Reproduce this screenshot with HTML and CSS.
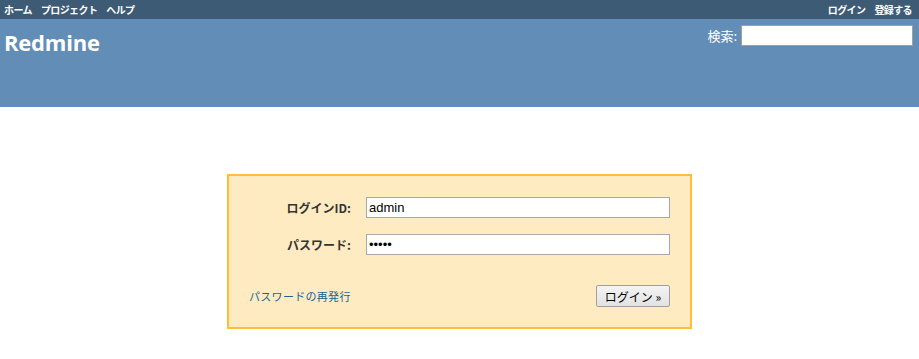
FILE: index.html
```html
<!DOCTYPE html>
<html lang="ja">
<head>
<meta charset="utf-8">
<title>Redmine</title>
<link rel="stylesheet" href="styles.css">
</head>
<body>
<div class="top-menu">
  <ul class="menu">
    <li><a href="#">ホーム</a></li>
    <li><a href="#">プロジェクト</a></li>
    <li><a href="#">ヘルプ</a></li>
  </ul>
  <ul class="menu">
    <li><a href="#">ログイン</a></li>
    <li><a href="#">登録する</a></li>
  </ul>
</div>
<div class="header">
  <h1 class="title">Redmine</h1>
  <form class="quick-search">
    <label class="search-label" for="q">検索:</label>
    <input class="search-input" id="q" type="text">
  </form>
</div>
<div class="content">
  <form class="login-box">
    <div class="fields">
      <label class="field-label" for="username">ログインID:</label>
      <input class="field-input" id="username" type="text" value="admin">
      <label class="field-label" for="password">パスワード:</label>
      <input class="field-input" id="password" type="password" value="admin">
    </div>
    <div class="actions">
      <a class="lost-link" href="#">パスワードの再発行</a>
      <button class="login-button" type="button">ログイン »</button>
    </div>
  </form>
</div>
</body>
</html>
```
FILE: styles.css
```css
html, body {
  margin: 0;
  padding: 0;
  background: #fff;
}
body {
  font-family: "Liberation Sans", "Noto Sans CJK JP", sans-serif;
  font-size: 12px;
  color: #333;
}
.top-menu {
  height: 19px;
  background: #3e5b76;
  display: flex;
  justify-content: space-between;
  align-items: center;
  padding: 0 7px 0 4px;
}
.menu {
  list-style: none;
  margin: 0;
  padding: 0;
  display: flex;
  gap: 9px;
}
.menu a {
  color: #fff;
  text-decoration: none;
  font-weight: bold;
  font-size: 10px;
  font-family: "Noto Sans CJK JP", sans-serif;
  letter-spacing: -0.6px;
}
.header {
  height: 88px;
  background: #628db6;
  display: flex;
  justify-content: space-between;
  align-items: flex-start;
  padding: 0 6px 0 4px;
  box-sizing: border-box;
}
.title {
  margin: 8px 0 0 0;
  font-family: "Open Sans", "DejaVu Sans", sans-serif;
  font-weight: bold;
  font-size: 22px;
  color: #fff;
  letter-spacing: -0.2px;
}
.quick-search {
  margin: 6px 0 0 0;
  display: flex;
  align-items: center;
  gap: 4px;
}
.search-label {
  color: #fff;
  font-size: 13px;
  font-family: "Noto Sans CJK JP", sans-serif;
}
.search-input {
  width: 172px;
  height: 21px;
  box-sizing: border-box;
  border: 1px solid #a0a0a0;
  margin: 0;
  padding: 1px 3px;
}
.content {
  padding-top: 67px;
}
.login-box {
  width: 465px;
  height: 155px;
  box-sizing: border-box;
  margin: 0 auto;
  background: #ffebc1;
  border: 2px solid #fdbf3b;
  padding: 21px 20px 0 20px;
}
.fields {
  display: grid;
  grid-template-columns: 102px 304px;
  column-gap: 15px;
  row-gap: 16px;
  align-items: center;
}
.field-label {
  text-align: right;
  font-weight: bold;
  font-size: 12px;
  color: #333;
  font-family: "Noto Sans CJK JP", sans-serif;
}
.field-input {
  height: 21px;
  box-sizing: border-box;
  border: 1px solid #a8a8a8;
  margin: 0;
  padding: 1px 2px;
  font-family: "Liberation Sans", sans-serif;
  font-size: 13px;
  color: #000;
  background: #fff;
}
.actions {
  display: flex;
  justify-content: space-between;
  align-items: center;
  margin-top: 30px;
}
.lost-link {
  color: #169;
  text-decoration: none;
  font-size: 11px;
  letter-spacing: 0.3px;
  font-family: "Noto Sans CJK JP", sans-serif;
}
.login-button {
  width: 74px;
  height: 22px;
  box-sizing: border-box;
  margin: 0;
  padding: 0 4px;
  border: 1px solid #a0a0a0;
  border-radius: 2px;
  background: linear-gradient(#f4f4f4, #e2e2e2);
  font-family: "Noto Sans CJK JP", sans-serif;
  font-size: 12px;
  color: #000;
}
```
